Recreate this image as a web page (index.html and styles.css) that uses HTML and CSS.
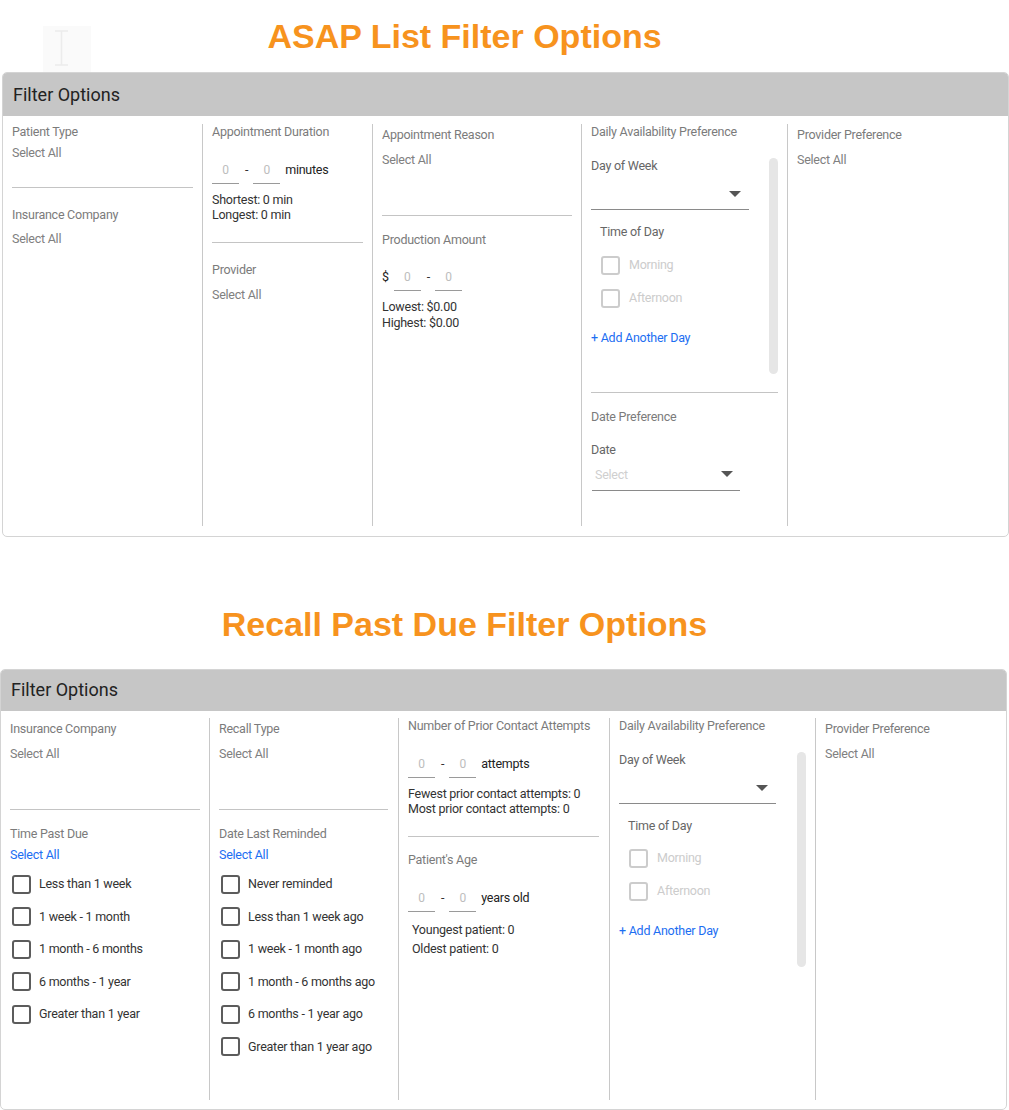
FILE: index.html
```html
<!DOCTYPE html>
<html lang="en">
<head>
<meta charset="utf-8">
<title>Filter Options</title>
<link rel="stylesheet" href="styles.css">
</head>
<body>
<div class="ghost">
  <svg width="48" height="46" viewBox="0 0 48 46"><path d="M12 5h13M12 39h13M18.5 5v34" stroke="#ececec" stroke-width="1.5" fill="none"/></svg>
</div>

<h1 class="title title-asap">ASAP List Filter Options</h1>
<section class="panel panel-asap">
  <div class="panel-head">Filter Options</div>
  <div class="panel-body">
    <div class="col a1">
      <div class="lbl">Patient Type</div>
      <div class="val mt5">Select All</div>
      <div class="rule mt26"></div>
      <div class="lbl mt19">Insurance Company</div>
      <div class="val mt8">Select All</div>
    </div>
    <div class="col a2">
      <div class="lbl">Appointment Duration</div>
      <div class="range mt22"><span class="num">0</span><span class="dash">-</span><span class="num">0</span><span class="unit">minutes</span></div>
      <div class="stats mt8"><div>Shortest: 0 min</div><div>Longest: 0 min</div></div>
      <div class="rule mt20"></div>
      <div class="lbl mt19">Provider</div>
      <div class="val mt9">Select All</div>
    </div>
    <div class="col a3">
      <div class="lbl mt3">Appointment Reason</div>
      <div class="val mt9">Select All</div>
      <div class="rule mt47"></div>
      <div class="lbl mt16">Production Amount</div>
      <div class="range mt21"><span class="cur">$</span><span class="num">0</span><span class="dash">-</span><span class="num">0</span></div>
      <div class="stats stats16 mt8"><div>Lowest: $0.00</div><div>Highest: $0.00</div></div>
    </div>
    <div class="col a4">
      <div class="lbl">Daily Availability Preference</div>
      <div class="scroll scroll-a mt10">
        <div class="scroll-inner">
          <div class="sub mt8">Day of Week</div>
          <div class="dd dd-week"><span class="caret"></span></div>
          <div class="sub tod mt14">Time of Day</div>
          <div class="opt off tod-opt mt15"><span class="box"></span><span>Morning</span></div>
          <div class="opt off tod-opt mt13"><span class="box"></span><span>Afternoon</span></div>
          <div class="link mt22">+ Add Another Day</div>
        </div>
        <div class="thumb thumb-a"></div>
      </div>
      <div class="rule mt14"></div>
      <div class="lbl mt16">Date Preference</div>
      <div class="sub mt17">Date</div>
      <div class="dd dd-date"><span class="ph">Select</span><span class="caret"></span></div>
    </div>
    <div class="col a5">
      <div class="lbl mt3">Provider Preference</div>
      <div class="val mt9">Select All</div>
    </div>
  </div>
</section>

<h1 class="title title-recall">Recall Past Due Filter Options</h1>
<section class="panel panel-recall">
  <div class="panel-head">Filter Options</div>
  <div class="panel-body">
    <div class="col r1">
      <div class="lbl mt3">Insurance Company</div>
      <div class="val mt9">Select All</div>
      <div class="rule mt47"></div>
      <div class="lbl mt16">Time Past Due</div>
      <div class="link mt5">Select All</div>
      <div class="opts mt11">
        <div class="opt"><span class="box"></span><span>Less than 1 week</span></div>
        <div class="opt"><span class="box"></span><span>1 week - 1 month</span></div>
        <div class="opt"><span class="box"></span><span>1 month - 6 months</span></div>
        <div class="opt"><span class="box"></span><span>6 months - 1 year</span></div>
        <div class="opt"><span class="box"></span><span>Greater than 1 year</span></div>
      </div>
    </div>
    <div class="col r2">
      <div class="lbl mt3">Recall Type</div>
      <div class="val mt9">Select All</div>
      <div class="rule mt47"></div>
      <div class="lbl mt16">Date Last Reminded</div>
      <div class="link mt5">Select All</div>
      <div class="opts mt11">
        <div class="opt"><span class="box"></span><span>Never reminded</span></div>
        <div class="opt"><span class="box"></span><span>Less than 1 week ago</span></div>
        <div class="opt"><span class="box"></span><span>1 week - 1 month ago</span></div>
        <div class="opt"><span class="box"></span><span>1 month - 6 months ago</span></div>
        <div class="opt"><span class="box"></span><span>6 months - 1 year ago</span></div>
        <div class="opt"><span class="box"></span><span>Greater than 1 year ago</span></div>
      </div>
    </div>
    <div class="col r3">
      <div class="lbl">Number of Prior Contact Attempts</div>
      <div class="range mt22"><span class="num">0</span><span class="dash">-</span><span class="num">0</span><span class="unit">attempts</span></div>
      <div class="stats mt8"><div>Fewest prior contact attempts: 0</div><div>Most prior contact attempts: 0</div></div>
      <div class="rule mt20"></div>
      <div class="lbl mt15">Patient's Age</div>
      <div class="range mt22"><span class="num">0</span><span class="dash">-</span><span class="num">0</span><span class="unit">years old</span></div>
      <div class="stats stats19 mt8"><div>Youngest patient: 0</div><div>Oldest patient: 0</div></div>
    </div>
    <div class="col r4">
      <div class="lbl">Daily Availability Preference</div>
      <div class="scroll scroll-r mt10">
        <div class="scroll-inner">
          <div class="sub mt8">Day of Week</div>
          <div class="dd dd-week dd-week-r"><span class="caret"></span></div>
          <div class="sub tod mt14">Time of Day</div>
          <div class="opt off tod-opt mt14"><span class="box"></span><span>Morning</span></div>
          <div class="opt off tod-opt mt13"><span class="box"></span><span>Afternoon</span></div>
          <div class="link mt22">+ Add Another Day</div>
        </div>
        <div class="thumb thumb-r"></div>
      </div>
    </div>
    <div class="col r5">
      <div class="lbl mt3">Provider Preference</div>
      <div class="val mt9">Select All</div>
    </div>
  </div>
</section>
</body>
</html>
```

FILE: styles.css
```css
body {
  margin: 0;
  width: 1009px;
  position: relative;
  background: #ffffff;
  font-family: Roboto, "Noto Sans", sans-serif;
  font-size: 12.5px;
  letter-spacing: -0.25px;
  line-height: 16px;
  color: #333333;
}

.ghost {
  position: absolute;
  left: 43px;
  top: 26px;
  width: 48px;
  height: 46px;
  background: #fafafa;
}
.ghost svg { display: block; }

.title {
  margin: 0;
  font-family: "Liberation Sans", Arial, sans-serif;
  font-weight: 700;
  font-size: 34px;
  letter-spacing: 0;
  color: #f7931e;
  text-align: center;
  padding-right: 80px;
}
.title-asap { height: 72px; line-height: 72px; }
.title-recall { height: 90px; line-height: 90px; margin-top: 42px; }

.panel {
  width: 1007px;
  box-sizing: border-box;
  border: 1px solid #d4d4d4;
  border-radius: 5px;
  overflow: hidden;
  background: #ffffff;
}
.panel-asap { margin-left: 2px; }

.panel-head {
  background: #c6c6c6;
  height: 43px;
  line-height: 44px;
  padding-left: 10px;
  font-size: 18px;
  letter-spacing: 0;
  color: #222222;
}
.panel-recall .panel-head { height: 41px; line-height: 40px; }

.panel-body {
  display: flex;
  box-sizing: border-box;
  padding: 8px 0 10px;
}
.panel-asap .panel-body { height: 420px; }
.panel-recall .panel-body { height: 398px; padding: 7px 0 9px; }

.col {
  flex: none;
  box-sizing: border-box;
  padding: 0 9px;
  border-left: 1px solid #c8c8c8;
}
.col:first-child { border-left: none; }
.a1 { width: 199px; }
.a2 { width: 170px; }
.a3 { width: 209px; }
.a4 { width: 206px; }
.a5 { flex: 1; }
.r1 { width: 208px; }
.r2 { width: 189px; padding-right: 10px; }
.r3 { width: 211px; padding-right: 10px; }
.r4 { width: 206px; }
.r5 { flex: 1; }

.lbl { color: #7b7b7b; }
.val { color: #808080; }
.sub { color: #666666; }
.link { color: #1c6ef2; }

.rule { height: 1px; background: #c4c4c4; }

.range { display: flex; align-items: flex-start; }
.num {
  width: 27px;
  height: 16px;
  padding-bottom: 5px;
  border-bottom: 1px solid #9a9a9a;
  text-align: center;
  color: #bdbdbd;
  font-size: 12px;
}
.dash { margin: 0 5px 0 6px; color: #333333; }
.unit { margin-left: 5px; color: #222222; }
.cur { margin-right: 5px; color: #222222; }

.stats { line-height: 15px; color: #333333; }
.stats16 { line-height: 16px; }
.stats19 { line-height: 19px; padding-left: 4px; }

.scroll { display: flex; }
.scroll-a { height: 228px; }
.scroll-r { height: 230px; }
.scroll-inner { flex: 1; }
.thumb {
  flex: none;
  width: 9px;
  margin-top: 8px;
  background: #e6e6e6;
  border-radius: 5px;
}
.thumb-a { height: 216px; }
.thumb-r { height: 215px; }

.dd {
  display: flex;
  justify-content: flex-end;
  box-sizing: border-box;
  border-bottom: 1px solid #8a8a8a;
}
.dd-week {
  width: 158px;
  height: 36px;
  align-items: center;
  padding: 4px 8px 0 0;
}
.dd-week-r { width: 157px; }
.dd-date {
  width: 148px;
  height: 33px;
  margin-left: 1px;
  justify-content: space-between;
  align-items: flex-start;
  padding: 9px 7px 0 3px;
}
.dd-date .caret { margin-top: 4px; }
.ph { color: #cfcfcf; }
.caret {
  width: 0;
  height: 0;
  border-left: 6px solid transparent;
  border-right: 6px solid transparent;
  border-top: 6px solid #555555;
}

.tod { padding-left: 9px; }

.opts { display: flex; flex-direction: column; gap: 12.5px; }
.opt {
  display: flex;
  align-items: center;
  height: 20px;
  gap: 8px;
  color: #333333;
}
.opts .opt { padding-left: 2px; }
.box {
  flex: none;
  width: 19px;
  height: 19px;
  box-sizing: border-box;
  border: 2px solid #5c5c5c;
  border-radius: 3px;
  background: #ffffff;
}
.opt.off { color: #cccccc; gap: 9px; }
.opt.off .box { border-color: #cccccc; }
.tod-opt { padding-left: 10px; }

.mt3 { margin-top: 3px; }
.mt5 { margin-top: 5px; }
.mt8 { margin-top: 8px; }
.mt9 { margin-top: 9px; }
.mt10 { margin-top: 10px; }
.mt11 { margin-top: 11px; }
.mt13 { margin-top: 13px; }
.mt14 { margin-top: 14px; }
.mt15 { margin-top: 15px; }
.mt16 { margin-top: 16px; }
.mt17 { margin-top: 17px; }
.mt19 { margin-top: 19px; }
.mt20 { margin-top: 20px; }
.mt21 { margin-top: 21px; }
.mt22 { margin-top: 22px; }
.mt26 { margin-top: 26px; }
.mt47 { margin-top: 47px; }
```
